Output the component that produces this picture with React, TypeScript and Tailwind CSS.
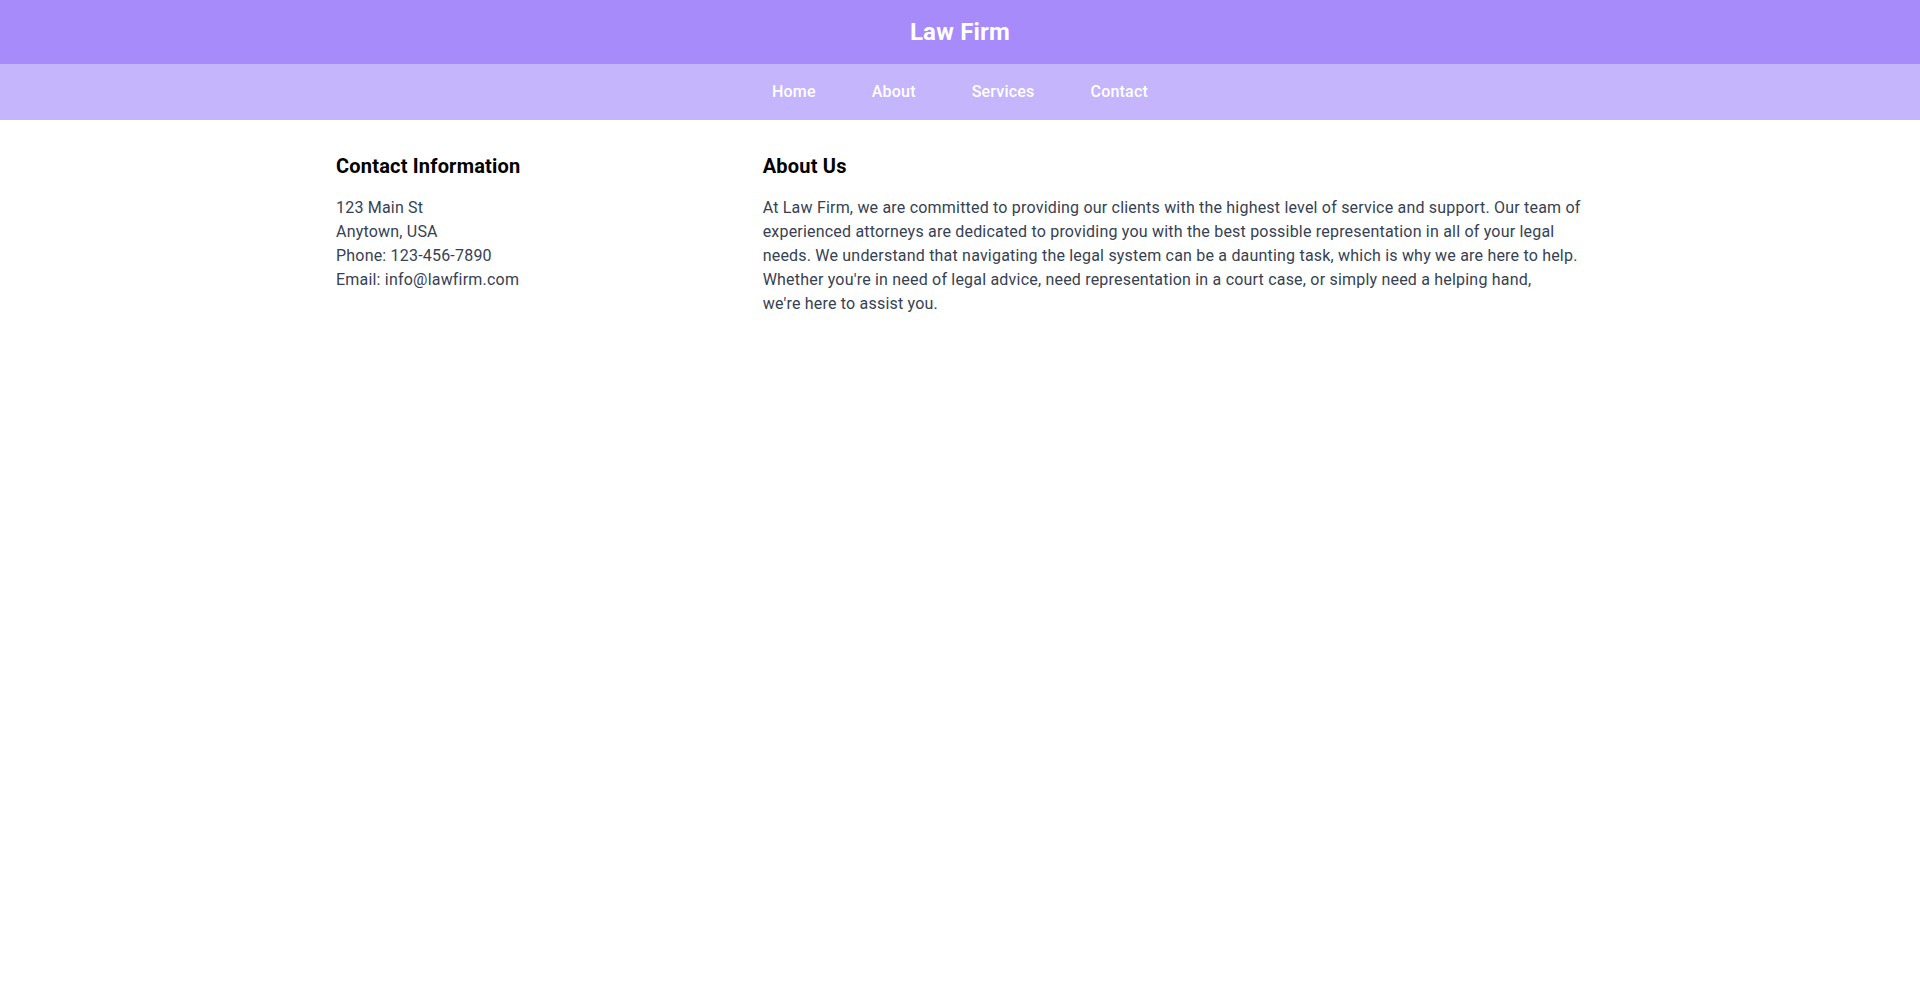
import React from "react";

const links = ["Home", "About", "Services", "Contact"];

export default function App() {
  return (
    <div className="min-h-screen bg-white font-['Roboto',sans-serif] tracking-[0.2px]">
      <header className="bg-[#a78bfa] py-4 text-center">
        <h1 className="text-2xl font-bold text-white">Law Firm</h1>
      </header>
      <nav className="bg-[#c4b5fd] py-4">
        <ul className="flex justify-center gap-8">
          {links.map((l) => (
            <li key={l}>
              <a href="#" className="px-3 font-medium text-white">
                {l}
              </a>
            </li>
          ))}
        </ul>
      </nav>
      <main className="max-w-7xl mx-auto px-4 py-8 grid grid-cols-3 gap-8">
        <section>
          <h2 className="text-xl font-bold text-black mb-4">
            Contact Information
          </h2>
          <p className="text-gray-700">123 Main St</p>
          <p className="text-gray-700">Anytown, USA</p>
          <p className="text-gray-700">Phone: 123-456-7890</p>
          <p className="text-gray-700">Email: info@lawfirm.com</p>
        </section>
        <section className="col-span-2">
          <h2 className="text-xl font-bold text-black mb-4">About Us</h2>
          <p className="text-gray-700">
            At Law Firm, we are committed to providing our clients with the
            highest level of service and support. Our team of experienced
            attorneys are dedicated to providing you with the best possible
            representation in all of your legal needs. We understand that
            navigating the legal system can be a daunting task, which is why we
            are here to help. Whether you're in need of legal advice, need
            representation in a court case, or simply need a helping hand,
            <br />
            we're here to assist you.
          </p>
        </section>
      </main>
    </div>
  );
}
